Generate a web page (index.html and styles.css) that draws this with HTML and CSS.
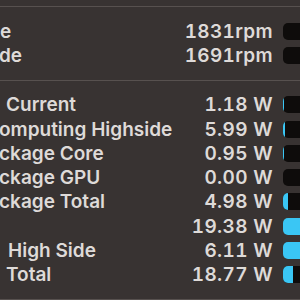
FILE: index.html
```html
<!DOCTYPE html>
<html>
<head>
<meta charset="utf-8">
<link rel="stylesheet" href="styles.css">
</head>
<body>
<div class="panel">
  <div class="sep"></div>
  <div class="section">
    <div class="row"><span class="lbl">e</span><span class="val">1831rpm</span><div class="bar"><div class="fill" style="width:0px"></div></div></div>
    <div class="row"><span class="lbl cut1">de</span><span class="val">1691rpm</span><div class="bar"><div class="fill" style="width:0px"></div></div></div>
  </div>
  <div class="sep"></div>
  <div class="section">
    <div class="row"><span class="lbl ind">Current</span><span class="val">1.18 W</span><div class="bar"><div class="fill" style="width:1.5px"></div></div></div>
    <div class="row"><span class="lbl cut1">omputing Highside</span><span class="val">5.99 W</span><div class="bar"><div class="fill" style="width:2.5px"></div></div></div>
    <div class="row"><span class="lbl cut1">ckage Core</span><span class="val">0.95 W</span><div class="bar"><div class="fill" style="width:1.5px"></div></div></div>
    <div class="row"><span class="lbl cut1">ckage GPU</span><span class="val">0.00 W</span><div class="bar"><div class="fill" style="width:0px"></div></div></div>
    <div class="row"><span class="lbl cut1">ckage Total</span><span class="val">4.98 W</span><div class="bar"><div class="fill" style="width:5px"></div></div></div>
    <div class="row"><span class="lbl"></span><span class="val">19.38 W</span><div class="bar"><div class="fill" style="width:100%"></div></div></div>
    <div class="row"><span class="lbl ind2">High Side</span><span class="val">6.11 W</span><div class="bar"><div class="fill" style="width:100%"></div></div></div>
    <div class="row"><span class="lbl ind">Total</span><span class="val">18.77 W</span><div class="bar"><div class="fill" style="width:10px"></div></div></div>
  </div>
  <div class="sep"></div>
</div>
</body>
</html>
```
FILE: styles.css
```css
html, body {
  margin: 0;
  padding: 0;
  width: 300px;
  height: 300px;
  overflow: hidden;
  background: #383332;
}
.panel {
  width: 320px;
  padding-top: 6px;
  font-family: Inter, "Liberation Sans", sans-serif;
  font-size: 19px;
  font-weight: 600;
  color: #dedad8;
}
.sep {
  height: 1px;
  background: #57514f;
}
.section {
  padding: 12px 0;
}
.row {
  display: flex;
  align-items: center;
  height: 24.3px;
}
.lbl {
  flex: 1;
  white-space: nowrap;
  overflow: hidden;
}
.ind { padding-left: 6px; }
.ind2 { padding-left: 8px; }
.cut1 { text-indent: -1px; }
.val {
  white-space: nowrap;
  text-align: right;
  margin-right: 9.5px;
  letter-spacing: 0.35px;
  font-variant-numeric: tabular-nums;
}
.bar {
  width: 37.5px;
  height: 17px;
  border-radius: 5px;
  background: #0e0c0b;
  overflow: hidden;
  flex-shrink: 0;
}
.fill {
  height: 100%;
  background: #3ac6f4;
}
```
